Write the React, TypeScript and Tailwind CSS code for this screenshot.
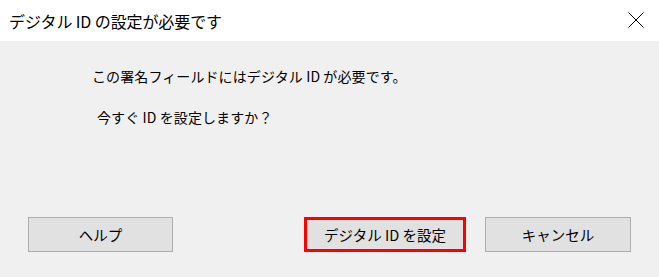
import React from "react";

export default function App() {
  const font = { fontFamily: '"Noto Sans CJK JP", "Noto Sans", sans-serif' };
  return (
    <div
      className="w-[659px] h-[277px] flex flex-col bg-[#f0f0f0] text-black overflow-hidden"
      style={font}
    >
      <div className="h-[41px] bg-white flex items-center justify-between pl-[9px] pr-[15px] shrink-0">
        <div className="text-[16px] leading-[20px] tracking-[-0.1px]">デジタル ID の設定が必要です</div>
        <svg width="16" height="16" viewBox="0 0 16 16" className="mt-[-1px]">
          <path d="M0.5 0.5 L15.5 15.5 M15.5 0.5 L0.5 15.5" stroke="#000" strokeWidth="1" fill="none" />
        </svg>
      </div>
      <div className="flex-1 flex flex-col">
        <div className="pl-[92px] pt-[25px] text-[14px] leading-[20px] tracking-[0.1px]">
          <div>この署名フィールドにはデジタル ID が必要です。</div>
          <div className="pl-[5px] mt-[21px]">今すぐ ID を設定しますか？</div>
        </div>
        <div className="mt-auto pb-[25px] pl-[28px] flex items-center text-[14.5px]">
          <div className="w-[145px] h-[35px] bg-[#e1e1e1] border border-[#adadad] flex items-center justify-center">
            ヘルプ
          </div>
          <div className="ml-[131px] w-[162px] h-[35px] bg-[#e1e1e1] border-[3px] border-[#ff0000] flex items-center justify-center">
            デジタル ID を設定
          </div>
          <div className="ml-[19px] w-[146px] h-[35px] bg-[#e1e1e1] border border-[#adadad] flex items-center justify-center">
            キャンセル
          </div>
        </div>
      </div>
    </div>
  );
}
